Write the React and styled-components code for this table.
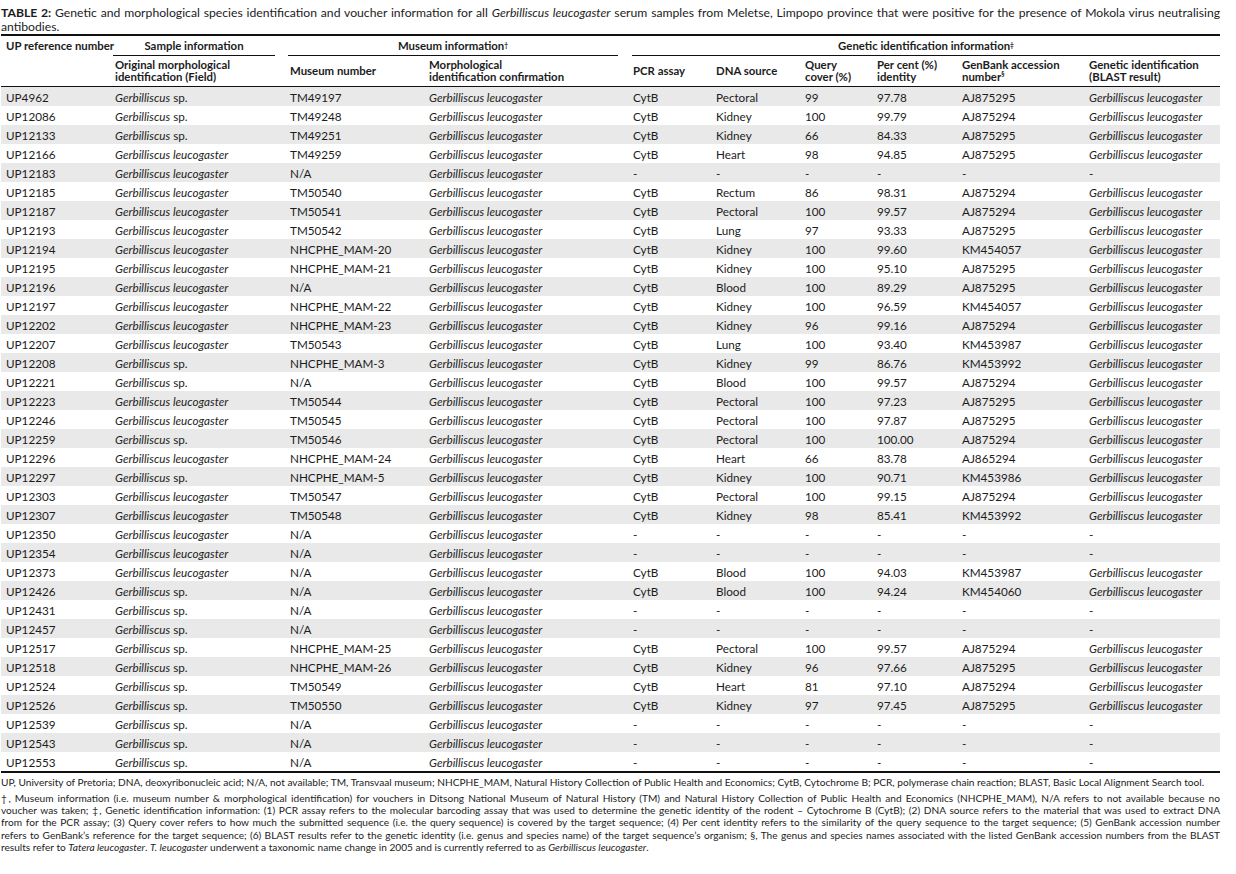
import React from "react";
import styled, { createGlobalStyle } from "styled-components";

const Global = createGlobalStyle`
  html, body { margin: 0; padding: 0; background: #fff; }
  body { font-family: Lato, "Open Sans", sans-serif; color: #1c1c1c; }
`;

const COLS = "109px 175px 139px 204px 83px 89px 72px 85px 127px 136px";

const Page = styled.div`
  width: 1219px;
  padding: 6px 0 0 1px;
`;

const Caption = styled.p`
  margin: 0;
  font-size: 12.2px;
  line-height: 14px;
  text-align: justify;
  b { font-weight: 700; }
`;

const Table = styled.div`
  border-top: 2px solid #111;
  border-bottom: 2px solid #111;
`;

const Grid = styled.div`
  display: grid;
  grid-template-columns: ${COLS};
`;

const HeadTop = styled(Grid)`
  height: 20px;
  font-weight: 700;
  font-size: 11.4px;
`;

const HeadBottom = styled(Grid)`
  height: 30px;
  border-bottom: 1px solid #111;
  font-weight: 700;
  font-size: 11.4px;
  line-height: 12px;
  align-items: center;
`;

const HeadCell = styled.div`
  padding-left: 5px;
  white-space: nowrap;
`;

const Label = styled.div`
  padding-left: 5px;
  display: flex;
  align-items: center;
  height: 19px;
  white-space: nowrap;
`;

const Group = styled.div`
  grid-column: ${(p) => p.$span};
  margin: 0 ${(p) => p.$mr}px 0 ${(p) => p.$ml}px;
  border-bottom: 1px solid #111;
  height: 19px;
  display: flex;
  align-items: center;
  justify-content: center;
  white-space: nowrap;
`;

const Sup = styled.sup`
  font-size: 6.5px;
  line-height: 0;
  vertical-align: 4px;
`;

const Row = styled(Grid)`
  height: 19px;
  align-items: center;
  font-size: 11.7px;
  background: ${(p) => (p.$shaded ? "#e9e9e9" : "#fff")};
`;

const Cell = styled.div`
  padding-left: 5px;
  white-space: nowrap;
`;

const Notes = styled.div`
  padding-top: 2.5px;
  font-size: 10.15px;
  line-height: 12.25px;
`;

const Note = styled.div`
  margin: 0 0 4px;
`;

const Line = styled.div`
  white-space: nowrap;
  text-align: ${(p) => (p.$last ? "left" : "justify")};
  text-align-last: ${(p) => (p.$last ? "left" : "justify")};
`;

const G = "Gerbilliscus";
const LEU = "L";
const SP = "S";

const rows = [
  ["UP4962", SP, "TM49197", "CytB", "Pectoral", "99", "97.78", "AJ875295"],
  ["UP12086", SP, "TM49248", "CytB", "Kidney", "100", "99.79", "AJ875294"],
  ["UP12133", SP, "TM49251", "CytB", "Kidney", "66", "84.33", "AJ875295"],
  ["UP12166", LEU, "TM49259", "CytB", "Heart", "98", "94.85", "AJ875295"],
  ["UP12183", LEU, "N/A"],
  ["UP12185", LEU, "TM50540", "CytB", "Rectum", "86", "98.31", "AJ875294"],
  ["UP12187", LEU, "TM50541", "CytB", "Pectoral", "100", "99.57", "AJ875294"],
  ["UP12193", LEU, "TM50542", "CytB", "Lung", "97", "93.33", "AJ875295"],
  ["UP12194", LEU, "NHCPHE_MAM-20", "CytB", "Kidney", "100", "99.60", "KM454057"],
  ["UP12195", LEU, "NHCPHE_MAM-21", "CytB", "Kidney", "100", "95.10", "AJ875295"],
  ["UP12196", LEU, "N/A", "CytB", "Blood", "100", "89.29", "AJ875295"],
  ["UP12197", LEU, "NHCPHE_MAM-22", "CytB", "Kidney", "100", "96.59", "KM454057"],
  ["UP12202", LEU, "NHCPHE_MAM-23", "CytB", "Kidney", "96", "99.16", "AJ875294"],
  ["UP12207", LEU, "TM50543", "CytB", "Lung", "100", "93.40", "KM453987"],
  ["UP12208", SP, "NHCPHE_MAM-3", "CytB", "Kidney", "99", "86.76", "KM453992"],
  ["UP12221", SP, "N/A", "CytB", "Blood", "100", "99.57", "AJ875294"],
  ["UP12223", LEU, "TM50544", "CytB", "Pectoral", "100", "97.23", "AJ875295"],
  ["UP12246", LEU, "TM50545", "CytB", "Pectoral", "100", "97.87", "AJ875295"],
  ["UP12259", SP, "TM50546", "CytB", "Pectoral", "100", "100.00", "AJ875294"],
  ["UP12296", LEU, "NHCPHE_MAM-24", "CytB", "Heart", "66", "83.78", "AJ865294"],
  ["UP12297", SP, "NHCPHE_MAM-5", "CytB", "Kidney", "100", "90.71", "KM453986"],
  ["UP12303", LEU, "TM50547", "CytB", "Pectoral", "100", "99.15", "AJ875294"],
  ["UP12307", LEU, "TM50548", "CytB", "Kidney", "98", "85.41", "KM453992"],
  ["UP12350", LEU, "N/A"],
  ["UP12354", LEU, "N/A"],
  ["UP12373", LEU, "N/A", "CytB", "Blood", "100", "94.03", "KM453987"],
  ["UP12426", SP, "N/A", "CytB", "Blood", "100", "94.24", "KM454060"],
  ["UP12431", SP, "N/A"],
  ["UP12457", SP, "N/A"],
  ["UP12517", SP, "NHCPHE_MAM-25", "CytB", "Pectoral", "100", "99.57", "AJ875294"],
  ["UP12518", SP, "NHCPHE_MAM-26", "CytB", "Kidney", "96", "97.66", "AJ875295"],
  ["UP12524", SP, "TM50549", "CytB", "Heart", "81", "97.10", "AJ875294"],
  ["UP12526", SP, "TM50550", "CytB", "Kidney", "97", "97.45", "AJ875295"],
  ["UP12539", SP, "N/A"],
  ["UP12543", SP, "N/A"],
  ["UP12553", SP, "N/A"],
];

const Species = ({ kind }) =>
  kind === SP ? (
    <>
      <i>{G}</i> sp.
    </>
  ) : (
    <i>{G} leucogaster</i>
  );

export default function App() {
  return (
    <Page>
      <Global />
      <Caption>
        <b>TABLE 2:</b> Genetic and morphological species identification and voucher information for all{" "}
        <i>Gerbilliscus leucogaster</i> serum samples from Meletse, Limpopo province that were positive for the
        presence of Mokola virus neutralising antibodies.
      </Caption>
      <Table>
        <HeadTop>
          <Label>UP reference number</Label>
          <Group $span="2 / 3" $ml={3} $mr={10}>Sample information</Group>
          <Group $span="3 / 5" $ml={3} $mr={10}>
            Museum information<Sup>†</Sup>
          </Group>
          <Group $span="5 / 11" $ml={4} $mr={0}>
            Genetic identification information<Sup>‡</Sup>
          </Group>
        </HeadTop>
        <HeadBottom>
          <HeadCell />
          <HeadCell>
            Original morphological
            <br />
            identification (Field)
          </HeadCell>
          <HeadCell>Museum number</HeadCell>
          <HeadCell>
            Morphological
            <br />
            identification confirmation
          </HeadCell>
          <HeadCell>PCR assay</HeadCell>
          <HeadCell>DNA source</HeadCell>
          <HeadCell>
            Query
            <br />
            cover (%)
          </HeadCell>
          <HeadCell>
            Per cent (%)
            <br />
            identity
          </HeadCell>
          <HeadCell>
            GenBank accession
            <br />
            number<Sup>§</Sup>
          </HeadCell>
          <HeadCell>
            Genetic identification
            <br />
            (BLAST result)
          </HeadCell>
        </HeadBottom>
        {rows.map((r, i) => {
          const has = r.length > 3;
          return (
            <Row key={r[0]} $shaded={i % 2 === 0}>
              <Cell>{r[0]}</Cell>
              <Cell>
                <Species kind={r[1]} />
              </Cell>
              <Cell>{r[2]}</Cell>
              <Cell>
                <i>Gerbilliscus leucogaster</i>
              </Cell>
              <Cell>{has ? r[3] : "-"}</Cell>
              <Cell>{has ? r[4] : "-"}</Cell>
              <Cell>{has ? r[5] : "-"}</Cell>
              <Cell>{has ? r[6] : "-"}</Cell>
              <Cell>{has ? r[7] : "-"}</Cell>
              <Cell>{has ? <i>Gerbilliscus leucogaster</i> : "-"}</Cell>
            </Row>
          );
        })}
      </Table>
      <Notes>
        <Note>
          <Line $last>
            UP, University of Pretoria; DNA, deoxyribonucleic acid; N/A, not available; TM, Transvaal museum;
            NHCPHE_MAM, Natural History Collection of Public Health and Economics; CytB, Cytochrome B; PCR,
            polymerase chain reaction; BLAST, Basic Local Alignment Search tool.
          </Line>
        </Note>
        <Note>
          <Line>
            †, Museum information (i.e. museum number &amp; morphological identification) for vouchers in Ditsong
            National Museum of Natural History (TM) and Natural History Collection of Public Health and Economics
            (NHCPHE_MAM), N/A refers to not available because no
          </Line>
          <Line>
            voucher was taken; ‡, Genetic identification information: (1) PCR assay refers to the molecular barcoding
            assay that was used to determine the genetic identity of the rodent – Cytochrome B (CytB); (2) DNA source
            refers to the material that was used to extract DNA
          </Line>
          <Line>
            from for the PCR assay; (3) Query cover refers to how much the submitted sequence (i.e. the query
            sequence) is covered by the target sequence; (4) Per cent identity refers to the similarity of the query
            sequence to the target sequence; (5) GenBank accession number
          </Line>
          <Line>
            refers to GenBank’s reference for the target sequence; (6) BLAST results refer to the genetic identity
            (i.e. genus and species name) of the target sequence’s organism; §, The genus and species names
            associated with the listed GenBank accession numbers from the BLAST
          </Line>
          <Line $last>
            results refer to <i>Tatera leucogaster</i>. <i>T. leucogaster</i> underwent a taxonomic name change in
            2005 and is currently referred to as <i>Gerbilliscus leucogaster</i>.
          </Line>
        </Note>
      </Notes>
    </Page>
  );
}
